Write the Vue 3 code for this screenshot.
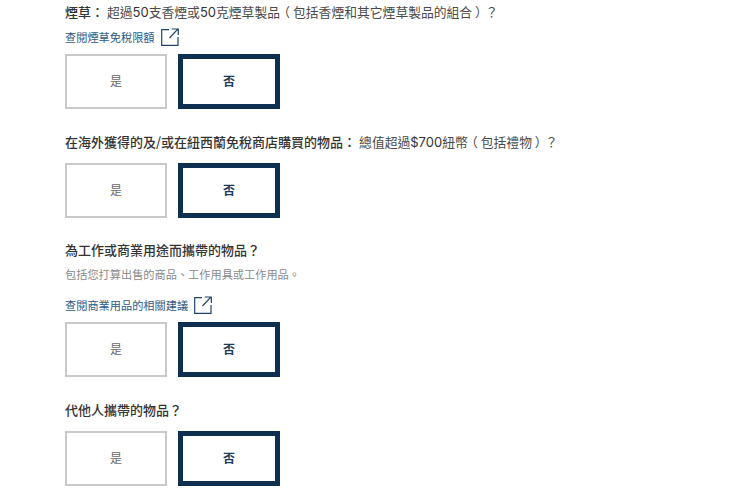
<script setup>
const questions = [
  {
    bold: '煙草：',
    rest: [['超過', 0], ['50', 1], ['支香煙或', 0], ['50', 1], ['克煙草製品', 0], ['（', 2], ['包括香煙和其它煙草製品的組合', 0], ['）', 2], ['？', 0]],
    link: '查閱煙草免稅限額',
    cls: 'q1'
  },
  {
    bold: '在海外獲得的及/或在紐西蘭免稅商店購買的物品：',
    rest: [['總值超過', 0], ['$700', 1], ['紐幣', 0], ['（', 2], ['包括禮物', 0], ['）', 2], ['？', 0]],
    cls: 'q2'
  },
  {
    bold: '為工作或商業用途而攜帶的物品？',
    hint: '包括您打算出售的商品、工作用具或工作用品。',
    link: '查閱商業用品的相關建議',
    cls: 'q3'
  },
  {
    bold: '代他人攜帶的物品？',
    cls: 'q4'
  }
]
const kinds = ['', 'latin', 'paren']
</script>

<template>
  <main class="page" lang="zh-Hant-TW">
    <section v-for="q in questions" :key="q.bold" class="question" :class="q.cls">
      <p class="title">
        <strong>{{ q.bold }}</strong>
        <span v-if="q.rest" class="rest"><span v-for="(r, i) in q.rest" :key="i" :class="kinds[r[1]]">{{ r[0] }}</span></span>
      </p>
      <p v-if="q.hint" class="hint">{{ q.hint }}</p>
      <a v-if="q.link" class="link" href="#" @click.prevent>
        <span>{{ q.link }}</span>
        <svg class="ext" width="18" height="18" viewBox="0 0 18 18" fill="none" stroke="#1f4468" stroke-width="1.2">
          <path d="M8 1.6H.7V17.4H17V9" />
          <path d="M8.5 10L16.8 1.2M10.8 1H17.3V7" />
        </svg>
      </a>
      <div class="choices">
        <button class="choice" type="button">是</button>
        <button class="choice selected" type="button">否</button>
      </div>
    </section>
  </main>
</template>

<style>
html, body { margin: 0; background: #fff; }
</style>

<style scoped>
.page {
  width: 740px;
  height: 496px;
  overflow: hidden;
  padding-left: 65px;
  box-sizing: border-box;
  font-family: "Noto Sans CJK TC", sans-serif;
  color: #2b2b2b;
}
.question { display: flex; flex-direction: column; align-items: flex-start; }
.title {
  display: flex;
  gap: 3px;
  margin: 0;
  font-size: 13px;
  line-height: 20px;
  white-space: nowrap;
  color: #333;
}
.title strong { font-weight: 500; }
.rest { color: #4a4a4a; font-size: 12.8px; }
.latin { font-family: Inter, sans-serif; font-size: 13px; color: #333; }
.paren {
  display: inline-block;
  width: 13px;
  text-align: center;
  font-feature-settings: "palt";
}
.hint {
  margin: 7px 0 0;
  font-size: 11.2px;
  line-height: 14px;
  color: #8a8a8a;
}
.link {
  display: flex;
  align-items: center;
  gap: 6px;
  font-size: 11.2px;
  line-height: 20px;
  color: #2c5a85;
  text-decoration: none;
}
.choices { display: flex; gap: 11px; }
.choice {
  width: 102px;
  height: 55px;
  box-sizing: border-box;
  padding: 0 0 2px;
  background: #fff;
  border: 2px solid #c9c9c9;
  font: inherit;
  font-size: 12px;
  color: #6a6a6a;
}
.choice.selected {
  border: 5px solid #0f2f50;
  color: #1d3a57;
  font-weight: 700;
}
.q1 { padding-top: 2px; }
.q1 .link { margin-top: 5px; margin-bottom: 7px; }
.q2 { margin-top: 23px; }
.q2 .choices { margin-top: 11px; }
.q3 { margin-top: 22px; }
.q3 .link { margin-top: 14px; margin-bottom: 7px; }
.q4 { margin-top: 23px; }
.q4 .choices { margin-top: 11px; }
</style>
